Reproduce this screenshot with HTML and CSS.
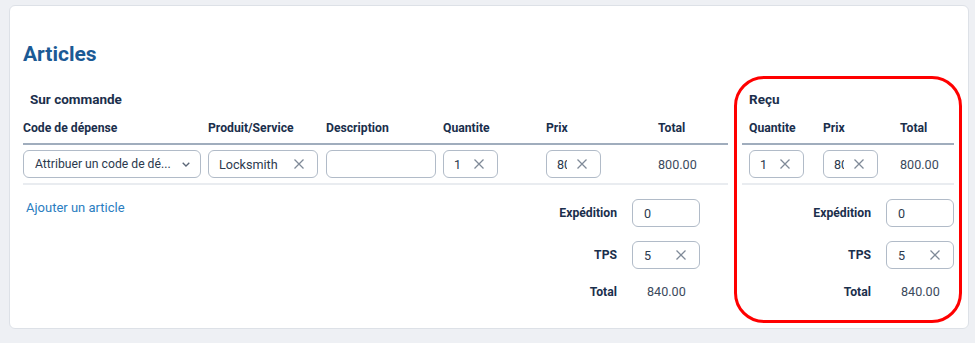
FILE: index.html
```html
<!DOCTYPE html>
<html lang="fr">
  <head>
    <meta charset="UTF-8" />
    <title>Articles</title>
    <link rel="stylesheet" href="styles.css">
  </head>
  <body>
    <div class="card">
      <h2 class="title">Articles</h2>
      <div class="sections">
        <div class="section ordered">
          <div class="subtitle">Sur commande</div>
          <div class="grid head">
            <div>Code de dépense</div>
            <div>Produit/Service</div>
            <div>Description</div>
            <div>Quantite</div>
            <div>Prix</div>
            <div>Total</div>
          </div>
          <div class="grid line">
            <div>
              <div class="field select w-code">
                <span class="val">Attribuer un code de dé...</span>
                <svg class="chev" viewBox="0 0 8 5" width="8" height="5"><path d="M0.7 0.7 L4 4 L7.3 0.7" /></svg>
              </div>
            </div>
            <div>
              <div class="field w-prod">
                <span class="val">Locksmith</span>
                <svg class="clear" viewBox="0 0 10 10" width="10" height="10"><path d="M0.5 0.5 L9.5 9.5 M9.5 0.5 L0.5 9.5" /></svg>
              </div>
            </div>
            <div>
              <div class="field w-desc"><span class="val"></span></div>
            </div>
            <div>
              <div class="field w-small">
                <span class="val">1</span>
                <svg class="clear" viewBox="0 0 10 10" width="10" height="10"><path d="M0.5 0.5 L9.5 9.5 M9.5 0.5 L0.5 9.5" /></svg>
              </div>
            </div>
            <div>
              <div class="field w-small">
                <span class="val">800</span>
                <svg class="clear" viewBox="0 0 10 10" width="10" height="10"><path d="M0.5 0.5 L9.5 9.5 M9.5 0.5 L0.5 9.5" /></svg>
              </div>
            </div>
            <div class="amount">800.00</div>
          </div>
          <div class="footer">
            <a class="add" href="#">Ajouter un article</a>
            <div class="totals">
              <div class="label">Expédition</div>
              <div class="field w-total"><span class="val">0</span></div>
              <div class="label">TPS</div>
              <div class="field w-total">
                <span class="val">5</span>
                <svg class="clear" viewBox="0 0 10 10" width="10" height="10"><path d="M0.5 0.5 L9.5 9.5 M9.5 0.5 L0.5 9.5" /></svg>
              </div>
              <div class="label">Total</div>
              <div class="sum">840.00</div>
            </div>
          </div>
        </div>

        <div class="section received">
          <div class="subtitle">Reçu</div>
          <div class="grid head">
            <div>Quantite</div>
            <div>Prix</div>
            <div>Total</div>
          </div>
          <div class="grid line">
            <div>
              <div class="field w-small">
                <span class="val">1</span>
                <svg class="clear" viewBox="0 0 10 10" width="10" height="10"><path d="M0.5 0.5 L9.5 9.5 M9.5 0.5 L0.5 9.5" /></svg>
              </div>
            </div>
            <div>
              <div class="field w-small">
                <span class="val">800</span>
                <svg class="clear" viewBox="0 0 10 10" width="10" height="10"><path d="M0.5 0.5 L9.5 9.5 M9.5 0.5 L0.5 9.5" /></svg>
              </div>
            </div>
            <div class="amount">800.00</div>
          </div>
          <div class="footer">
            <div class="totals">
              <div class="label">Expédition</div>
              <div class="field w-total"><span class="val">0</span></div>
              <div class="label">TPS</div>
              <div class="field w-total">
                <span class="val">5</span>
                <svg class="clear" viewBox="0 0 10 10" width="10" height="10"><path d="M0.5 0.5 L9.5 9.5 M9.5 0.5 L0.5 9.5" /></svg>
              </div>
              <div class="label">Total</div>
              <div class="sum">840.00</div>
            </div>
          </div>
          <div class="highlight"></div>
        </div>
      </div>
    </div>
  </body>
</html>
```

FILE: styles.css
```css
body {
  margin: 0;
  padding: 5px 6px 0 9px;
  background-color: #eef0f4;
  font-family: Roboto, "Liberation Sans", Arial, sans-serif;
  font-size: 12.6px;
  color: #3c4a5d;
}

.card {
  background-color: #fff;
  border: 1px solid #dde1e7;
  border-radius: 6px;
  padding: 33px 13px 27px 13px;
  height: 324px;
  box-sizing: border-box;
}

.title {
  margin: 0;
  font-size: 21px;
  line-height: 30px;
  font-weight: 700;
  color: #1b5a95;
}

.sections {
  display: flex;
  gap: 14px;
  margin-top: 21px;
}

.section {
  position: relative;
}

.section.ordered {
  width: 705px;
}

.section.received {
  width: 212px;
}

.subtitle {
  padding-left: 7px;
  font-size: 13.5px;
  line-height: 18px;
  font-weight: 700;
  color: #1b2f4c;
}

.grid {
  display: grid;
  align-items: center;
}

.ordered .grid {
  grid-template-columns: 185px 118px 117px 103px 112px 70px;
}

.received .grid {
  grid-template-columns: 74px 77px 54px;
  padding-left: 7px;
}

.head {
  margin-top: 11px;
  padding-bottom: 6px;
  border-bottom: 2px solid #a0adbd;
  font-size: 12.2px;
  line-height: 18px;
  font-weight: 700;
  color: #1b2f4c;
}

.line {
  padding: 5px 0;
  border-bottom: 2px solid #e9ecf0;
}

.field {
  display: flex;
  align-items: center;
  height: 28px;
  box-sizing: border-box;
  border: 1px solid #b1bbc8;
  border-radius: 6px;
  padding: 0 13px 0 10px;
  color: #2c3a4e;
  background-color: #fff;
}

.field .val {
  flex: 1;
  min-width: 0;
  overflow: hidden;
  white-space: nowrap;
  margin-right: 10px;
}

.field svg path {
  fill: none;
  stroke: #7f8a98;
  stroke-width: 1.3;
}

.w-code {
  width: 178px;
  padding-left: 11px;
  padding-right: 10px;
}

.w-code .val {
  overflow: visible;
  margin-right: 8px;
  font-size: 12.2px;
}

.w-code .chev path {
  stroke-width: 1.3;
  stroke: #5b6677;
}

.w-prod,
.w-desc {
  width: 110px;
}

.w-small {
  width: 55px;
}

.w-total {
  width: 68px;
  padding-left: 11px;
}

.footer {
  display: flex;
  justify-content: space-between;
  align-items: flex-start;
  padding-top: 14px;
}

.received .footer {
  justify-content: flex-end;
}

.add {
  margin-left: 3px;
  margin-top: 1px;
  color: #2a7dbf;
  text-decoration: none;
  font-size: 13px;
  line-height: 16px;
}

.totals {
  display: grid;
  grid-template-columns: auto 68px;
  column-gap: 15px;
  row-gap: 14px;
  align-items: center;
}

.ordered .totals {
  margin-right: 28px;
}

.totals .label {
  text-align: right;
  font-weight: 700;
  color: #1b2f4c;
  font-size: 12.2px;
}

.totals .sum {
  padding-left: 15px;
  line-height: 18px;
}

.highlight {
  position: absolute;
  top: -14px;
  left: -8px;
  right: -8px;
  bottom: -22px;
  border: 3px solid #f00;
  border-radius: 30px;
  pointer-events: none;
}
```
